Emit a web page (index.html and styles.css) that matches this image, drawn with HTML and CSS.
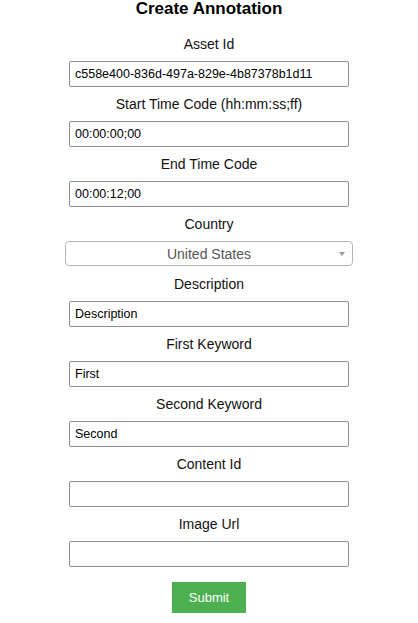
FILE: index.html
```html
<!DOCTYPE html>
<html>
<head>
<meta charset="utf-8">
<link rel="stylesheet" href="styles.css">
</head>
<body>
<form class="form">
  <h1 class="title">Create Annotation</h1>
  <div class="group">
    <label class="label">Asset Id</label>
    <input class="field" type="text" value="c558e400-836d-497a-829e-4b87378b1d11">
  </div>
  <div class="group">
    <label class="label">Start Time Code (hh:mm:ss;ff)</label>
    <input class="field" type="text" value="00:00:00;00">
  </div>
  <div class="group">
    <label class="label">End Time Code</label>
    <input class="field" type="text" value="00:00:12;00">
  </div>
  <div class="group">
    <label class="label">Country</label>
    <div class="select">
      <span class="select-text">United States</span>
      <span class="arrow"></span>
    </div>
  </div>
  <div class="group">
    <label class="label">Description</label>
    <input class="field" type="text" value="Description">
  </div>
  <div class="group">
    <label class="label">First Keyword</label>
    <input class="field" type="text" value="First">
  </div>
  <div class="group">
    <label class="label">Second Keyword</label>
    <input class="field" type="text" value="Second">
  </div>
  <div class="group">
    <label class="label">Content Id</label>
    <input class="field" type="text" value="">
  </div>
  <div class="group">
    <label class="label">Image Url</label>
    <input class="field" type="text" value="">
  </div>
  <div class="actions">
    <button class="submit" type="button">Submit</button>
  </div>
</form>
</body>
</html>
```
FILE: styles.css
```css
html, body {
  margin: 0;
  padding: 0;
  background: #ffffff;
}
body {
  width: 418px;
  font-family: "Liberation Sans", Arial, sans-serif;
  color: #111;
}
.form {
  display: flex;
  flex-direction: column;
  align-items: center;
}
.title {
  margin: 0;
  font-size: 17px;
  line-height: 17px;
  font-weight: bold;
  padding-top: 0;
  height: 35px;
  color: #000;
}
.group {
  display: flex;
  flex-direction: column;
  align-items: center;
  height: 60px;
}
.label {
  display: block;
  font-size: 14px;
  line-height: 16px;
  height: 16px;
  margin-top: 1px;
  margin-bottom: 9px;
  color: #111;
}
.field {
  box-sizing: border-box;
  width: 280px;
  height: 26px;
  margin: 0;
  padding: 0 5px;
  border: 1px solid #8d8d99;
  border-radius: 2px;
  font-family: "Liberation Sans", Arial, sans-serif;
  font-size: 12.5px;
  color: #000;
  background: #fff;
  outline: none;
}
.select {
  box-sizing: border-box;
  width: 288px;
  height: 25px;
  border: 1px solid #b5b5b5;
  border-radius: 4px;
  position: relative;
  display: flex;
  align-items: center;
  justify-content: center;
}
.select-text {
  font-size: 14px;
  color: #555;
}
.arrow {
  position: absolute;
  right: 7px;
  top: 10px;
  width: 0;
  height: 0;
  border-left: 3px solid transparent;
  border-right: 3px solid transparent;
  border-top: 4px solid #999;
}
.actions {
  display: flex;
  justify-content: center;
  padding-top: 7px;
}
.submit {
  width: 74px;
  height: 31px;
  border: none;
  background: #4caf50;
  color: #fff;
  font-family: "Liberation Sans", Arial, sans-serif;
  font-size: 13px;
  padding: 0;
  margin: 0;
}
```
